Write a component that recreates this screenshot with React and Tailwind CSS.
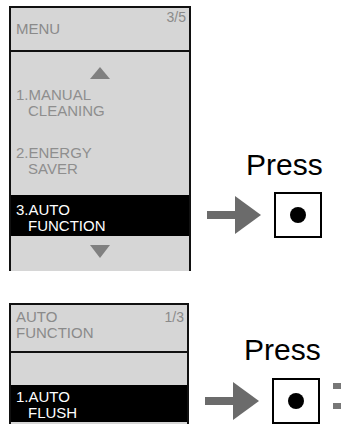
import React from "react";

const F = { fontFamily: '"Liberation Sans", Arial, sans-serif' };

function Arrow() {
  return (
    <svg width="54" height="38" viewBox="0 0 54 38">
      <rect x="0" y="15" width="29" height="8" fill="#6b6b6b" />
      <polygon points="28,0 54,19 28,38" fill="#6b6b6b" />
    </svg>
  );
}

function Button() {
  return (
    <div className="w-[48px] h-[46px] border-2 border-black bg-white flex items-center justify-center shrink-0">
      <div className="w-[16px] h-[16px] rounded-full bg-black" />
    </div>
  );
}

function Item({ a, b, active }) {
  return (
    <div className={active ? "text-white" : "text-[#8e8e8e]"}>
      <div className="h-[16px] leading-[16px]">{a}</div>
      <div className="h-[16px] leading-[16px] pl-[12px]">{b}</div>
    </div>
  );
}

function TriUp() {
  return (
    <svg width="20" height="12" viewBox="0 0 20 12">
      <polygon points="10,0 20,12 0,12" fill="#808080" />
    </svg>
  );
}
function TriDown() {
  return (
    <svg width="20" height="13" viewBox="0 0 20 13">
      <polygon points="0,0 20,0 10,13" fill="#808080" />
    </svg>
  );
}

export default function App() {
  return (
    <div className="w-[341px] h-[424px] overflow-hidden bg-white text-[15px]" style={F}>
      {/* Section 1 */}
      <div className="flex items-start h-[271px]">
        <div className="ml-[9px] mt-[6px] w-[182px] h-[265px] border-t-2 border-l-2 border-r-2 border-[#111] bg-[#d6d6d6] flex flex-col">
          <div className="relative h-[42px] border-b-2 border-[#111] box-content flex items-center pl-[5px] text-[#8a8a8a]">
            <span className="leading-[16px]">MENU</span>
            <span className="absolute right-[3px] top-[1px] leading-[16px] text-[14px] text-[#8a8a8a]">3/5</span>
          </div>
          <div className="flex flex-col">
            <div className="flex justify-center mt-[15px] h-[12px]">
              <TriUp />
            </div>
            <div className="pl-[5px] mt-[8px]">
              <Item a="1.MANUAL" b="CLEANING" />
            </div>
            <div className="pl-[5px] mt-[26px]">
              <Item a="2.ENERGY" b="SAVER" />
            </div>
            <div className="mt-[18px] h-[41px] bg-black pl-[5px] pt-[7px]">
              <Item a="3.AUTO" b="FUNCTION" active />
            </div>
            <div className="flex justify-center mt-[9px]">
              <TriDown />
            </div>
          </div>
        </div>
        <div className="ml-[16px] flex flex-col mt-[148px]">
          <div className="ml-[39px] text-[30px] leading-[34px] text-black">Press</div>
          <div className="flex items-center mt-[10px] gap-[13px]">
            <Arrow />
            <Button />
          </div>
        </div>
      </div>
      {/* Section 2 */}
      <div className="flex items-start">
        <div className="ml-[9px] mt-[32px] w-[182px] h-[130px] border-t-2 border-l-2 border-r-2 border-[#111] bg-[#d6d6d6] flex flex-col">
          <div className="relative h-[42px] border-b-2 border-[#111] box-content pl-[5px] pt-[4px] text-[#8a8a8a]">
            <div className="leading-[16px]">AUTO</div>
            <div className="leading-[16px]">FUNCTION</div>
            <span className="absolute right-[3px] top-[4px] leading-[16px] text-[14px]">1/3</span>
          </div>
          <div className="h-[32px]" />
          <div className="h-[37px] bg-black pl-[5px] pt-[4px]">
            <Item a="1.AUTO" b="FLUSH" active />
          </div>
        </div>
        <div className="ml-[16px] flex flex-col mt-[62px]">
          <div className="ml-[39px] text-[30px] leading-[34px] text-black">Press</div>
          <div className="flex items-center mt-[11px]">
            <Arrow />
            <div className="ml-[13px]">
              <Button />
            </div>
            <div className="ml-[13px] flex flex-col gap-[14px] mt-[-10px]">
              <div className="w-[8px] h-[6px] bg-[#777]" />
              <div className="w-[8px] h-[6px] bg-[#777]" />
            </div>
          </div>
        </div>
      </div>
    </div>
  );
}
